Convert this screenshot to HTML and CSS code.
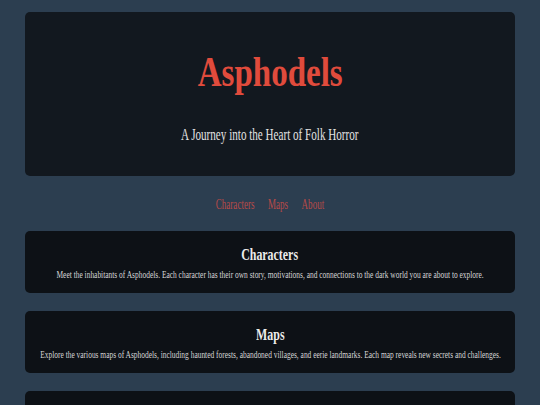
FILE: index.html
```html
<!DOCTYPE html>
<html lang="en">
<head>
<meta charset="utf-8">
<title>Asphodels</title>
<link rel="stylesheet" href="styles.css">
</head>
<body>
<div class="page">
  <header class="hero">
    <h1 class="hero-title"><span class="squeeze">Asphodels</span></h1>
    <p class="hero-sub"><span class="squeeze">A Journey into the Heart of Folk Horror</span></p>
  </header>
  <nav class="nav">
    <div class="nav-list">
      <a class="nav-link" href="#characters">Characters</a>
      <a class="nav-link" href="#maps">Maps</a>
      <a class="nav-link" href="#about">About</a>
    </div>
  </nav>
  <section class="card" id="characters">
    <h2 class="card-title"><span class="squeeze">Characters</span></h2>
    <p class="card-text"><span class="squeeze">Meet the inhabitants of Asphodels. Each character has their own story, motivations, and connections to the dark world you are about to explore.</span></p>
  </section>
  <section class="card" id="maps">
    <h2 class="card-title"><span class="squeeze">Maps</span></h2>
    <p class="card-text"><span class="squeeze">Explore the various maps of Asphodels, including haunted forests, abandoned villages, and eerie landmarks. Each map reveals new secrets and challenges.</span></p>
  </section>
  <section class="card" id="about">
    <h2 class="card-title"><span class="squeeze">About</span></h2>
    <p class="card-text"><span class="squeeze">Learn more about the world of Asphodels and the stories behind it.</span></p>
  </section>
</div>
</body>
</html>
```
FILE: styles.css
```css
html, body {
  margin: 0;
  padding: 0;
  background: #2c3e50;
  overflow-x: hidden;
}
body {
  font-family: "Liberation Serif", "Times New Roman", serif;
  color: #e6e6e6;
}
.page {
  padding: 12px 25px 0;
  display: flex;
  flex-direction: column;
}
.squeeze {
  display: inline-block;
  white-space: nowrap;
  transform: scaleX(var(--sx, 0.7));
  transform-origin: center;
}
.hero {
  background: #12181f;
  border-radius: 5px;
  height: 164px;
  display: flex;
  flex-direction: column;
  align-items: center;
  box-sizing: border-box;
  padding-top: 36px;
  overflow: hidden;
}
.hero-title {
  margin: 0;
  font-size: 42px;
  line-height: 48px;
  font-weight: bold;
  color: #e04b3c;
  --sx: 0.786;
}
.hero-sub {
  margin: 29px 0 0;
  font-size: 16.5px;
  line-height: 20px;
  color: #e2e2e2;
  --sx: 0.674;
}
.nav {
  display: flex;
  justify-content: center;
  padding: 20px 0 17px;
}
.nav-list {
  display: flex;
  gap: 21px;
  white-space: nowrap;
  transform: scaleX(0.645);
  transform-origin: center;
}
.nav-link {
  color: #b94a48;
  text-decoration: none;
  font-size: 14px;
  line-height: 18px;
}
.card {
  background: #0d1116;
  border-radius: 5px;
  height: 62px;
  margin-bottom: 18px;
  display: flex;
  flex-direction: column;
  align-items: center;
  box-sizing: border-box;
  padding-top: 12.5px;
  overflow: hidden;
}
.card-title {
  margin: 0;
  font-size: 17px;
  line-height: 22px;
  font-weight: bold;
  color: #ececec;
  --sx: 0.70;
}
.card-text {
  margin: 2.5px 0 0;
  font-size: 10px;
  line-height: 14px;
  color: #d6d6d6;
  --sx: 0.744;
}
```
